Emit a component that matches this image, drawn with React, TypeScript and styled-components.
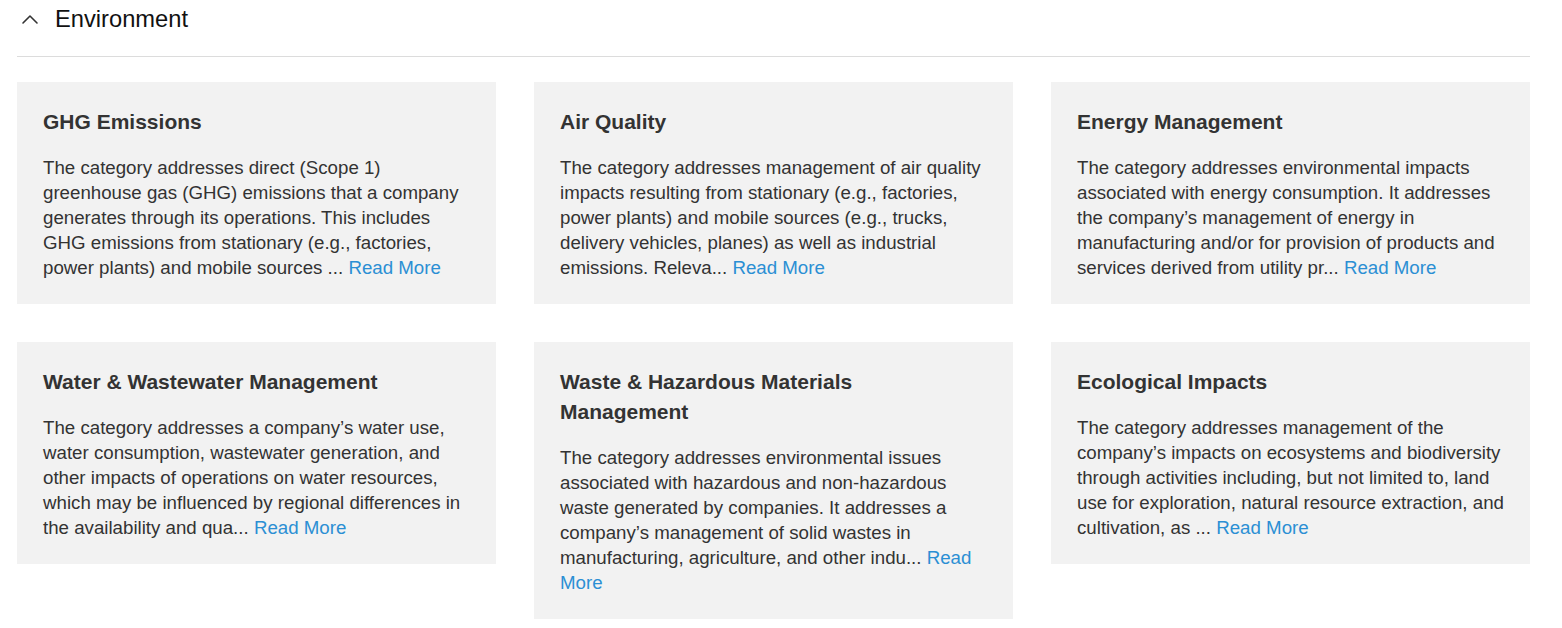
import React from "react";
import styled, { createGlobalStyle } from "styled-components";

const Global = createGlobalStyle`
  html, body { margin: 0; padding: 0; background: #fff; }
  body { font-family: "Liberation Sans", Arial, sans-serif; }
`;

const Page = styled.div`
  padding: 0 32px 0 17px;
`;

const Header = styled.div`
  display: flex;
  align-items: center;
  height: 38px;
  padding-bottom: 18px;
  border-bottom: 1px solid #dcdcdc;
`;

const Toggle = styled.button`
  display: flex;
  align-items: center;
  justify-content: center;
  width: 26px;
  height: 26px;
  margin: 0 12px 0 0;
  padding: 0;
  border: 0;
  background: transparent;
  color: #333;
  cursor: pointer;
`;

const Title = styled.h2`
  margin: 0;
  font-size: 23.7px;
  font-weight: 400;
  color: #111;
  line-height: 38px;
`;

const Grid = styled.div`
  display: grid;
  grid-template-columns: repeat(3, 1fr);
  column-gap: 38px;
  row-gap: 38px;
  align-items: start;
  margin-top: 25px;
`;

const Card = styled.div`
  background: #f2f2f2;
  padding: 25px 25px 24px 26px;
`;

const CardTitle = styled.h3`
  margin: 0 0 18px 0;
  padding-right: 10px;
  font-size: 21px;
  line-height: 30px;
  font-weight: 700;
  color: #333;
`;

const Body = styled.p`
  margin: 0;
  font-size: 18.7px;
  line-height: 25px;
  color: #333;
`;

const More = styled.a`
  color: #2b8fd4;
  text-decoration: none;
`;

const items = [
  {
    t: "GHG Emissions",
    d: "The category addresses direct (Scope 1) greenhouse gas (GHG) emissions that a company generates through its operations. This includes GHG emissions from stationary (e.g., factories, power plants) and mobile sources ...",
  },
  {
    t: "Air Quality",
    d: "The category addresses management of air quality impacts resulting from stationary (e.g., factories, power plants) and mobile sources (e.g., trucks, delivery vehicles, planes) as well as industrial emissions. Releva...",
  },
  {
    t: "Energy Management",
    d: "The category addresses environmental impacts associated with energy consumption. It addresses the company\u2019s management of energy in manufacturing and/or for provision of products and services derived from utility pr...",
  },
  {
    t: "Water & Wastewater Management",
    d: "The category addresses a company\u2019s water use, water consumption, wastewater generation, and other impacts of operations on water resources, which may be influenced by regional differences in the availability and qua...",
  },
  {
    t: "Waste & Hazardous Materials Management",
    d: "The category addresses environmental issues associated with hazardous and non-hazardous waste generated by companies. It addresses a company\u2019s management of solid wastes in manufacturing, agriculture, and other indu...",
  },
  {
    t: "Ecological Impacts",
    d: "The category addresses management of the company\u2019s impacts on ecosystems and biodiversity through activities including, but not limited to, land use for exploration, natural resource extraction, and cultivation, as ...",
  },
];

export default function App() {
  return (
    <Page>
      <Global />
      <Header>
        <Toggle aria-label="Collapse">
          <svg width="18" height="12" viewBox="0 0 18 12" fill="none">
            <polyline
              points="2,10 9,3 16,10"
              stroke="currentColor"
              strokeWidth="1.6"
              strokeLinecap="round"
              strokeLinejoin="round"
            />
          </svg>
        </Toggle>
        <Title>Environment</Title>
      </Header>
      <Grid>
        {items.map((it) => (
          <Card key={it.t}>
            <CardTitle>{it.t}</CardTitle>
            <Body>
              {it.d} <More href="#">Read More</More>
            </Body>
          </Card>
        ))}
      </Grid>
    </Page>
  );
}
